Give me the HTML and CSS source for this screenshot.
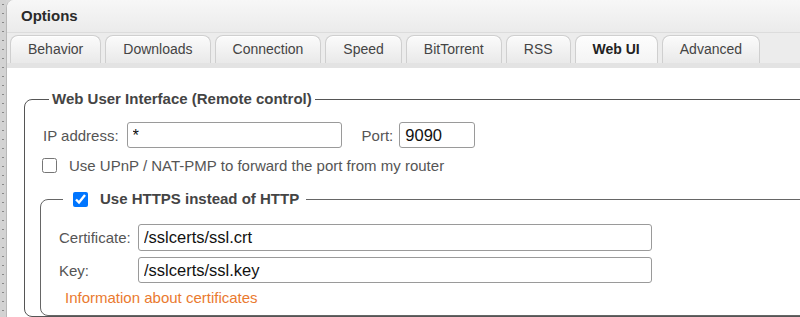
FILE: index.html
```html
<!DOCTYPE html>
<html lang="en">
<head>
    <meta charset="UTF-8">
    <title>Options</title>
    <link rel="stylesheet" href="styles.css">
</head>
<body>
    <div class="backdrop"></div>

    <div class="window">
        <div class="titlebar">Options</div>

        <div class="tabs">
            <div class="tab">Behavior</div>
            <div class="tab">Downloads</div>
            <div class="tab">Connection</div>
            <div class="tab">Speed</div>
            <div class="tab">BitTorrent</div>
            <div class="tab">RSS</div>
            <div class="tab active">Web UI</div>
            <div class="tab">Advanced</div>
        </div>

        <div class="content">
            <fieldset class="group">
                <legend class="group-title">Web User Interface (Remote control)</legend>

                <div class="row">
                    <label class="label" for="ip">IP address:</label>
                    <input class="field ip" id="ip" type="text" value="*">
                    <label class="label port-label" for="port">Port:</label>
                    <input class="field port" id="port" type="text" value="9090">
                </div>

                <div class="row check-row">
                    <input class="check" type="checkbox" id="upnp">
                    <label class="label" for="upnp">Use UPnP / NAT-PMP to forward the port from my router</label>
                </div>

                <fieldset class="group inner">
                    <legend class="group-title https">
                        <input class="check" type="checkbox" id="https" checked>
                        <label for="https">Use HTTPS instead of HTTP</label>
                    </legend>

                    <div class="cert-grid">
                        <label class="label" for="cert">Certificate:</label>
                        <input class="field" id="cert" type="text" value="/sslcerts/ssl.crt">
                        <label class="label" for="key">Key:</label>
                        <input class="field" id="key" type="text" value="/sslcerts/ssl.key">
                    </div>

                    <a class="info-link" href="#">Information about certificates</a>
                </fieldset>
            </fieldset>
        </div>
    </div>
</body>
</html>
```

FILE: styles.css
```css
* {
    box-sizing: border-box;
}

body {
    margin: 0;
    height: 317px;
    display: flex;
    overflow: hidden;
    background: #d6d6d6;
    font-family: 'Liberation Sans', Arial, sans-serif;
    font-size: 15px;
    color: #555;
}

/* page behind the dialog */
.backdrop {
    width: 6px;
    flex-shrink: 0;
    background-color: #d3d3d3;
    background-image: radial-gradient(circle, #888 0.7px, transparent 1px);
    background-size: 6px 9px;
}

.window {
    flex: 1;
    min-width: 1000px;
    background: #fff;
    border-left: 1px solid #b8b8b8;
    border-top-left-radius: 8px;
    overflow: hidden;
}

.titlebar {
    height: 33px;
    padding-left: 14px;
    line-height: 31px;
    font-weight: bold;
    color: #2a2a2a;
    background: linear-gradient(#f7f7f7, #ebebeb);
    border-bottom: 1px solid #dcdcdc;
}

.tabs {
    display: flex;
    gap: 4px;
    height: 35px;
    padding: 2px 0 0 3px;
    background: #ececec;
    border-bottom: 5px solid #e3e3e3;
}

.tab {
    height: 28px;
    padding: 0 17px;
    line-height: 27px;
    font-size: 14px;
    color: #444;
    background: linear-gradient(#fbfbfb, #e9e9e9);
    border: 1px solid #cfcfcf;
    border-bottom: none;
    border-radius: 8px 8px 0 0;
    box-shadow: inset 0 1px 0 #fff;
}

.tab.active {
    font-weight: bold;
    color: #222;
    background: linear-gradient(#fdfdfd, #f4f4f4);
}

.content {
    padding: 21px 0 0 17px;
}

.group {
    margin: 0;
    padding: 13px 18px 0;
    border: 1px solid #555;
    border-radius: 8px;
}

.group-title {
    margin-left: 6px;
    padding: 0 3px;
    font-weight: bold;
    color: #444;
    line-height: 20px;
}

.row {
    display: flex;
    align-items: center;
    height: 26px;
}

.label {
    color: #555;
}

.field {
    height: 26px;
    padding: 0 6px 0 5px;
    font-family: inherit;
    font-size: 16.5px;
    color: #111;
    border: 1px solid #9a9a9a;
    border-radius: 3px;
    background: #fff;
}

.ip {
    width: 215px;
    margin-left: 8px;
}

.port-label {
    margin-left: 20px;
}

.port {
    width: 76px;
    margin-left: 6px;
}

.check-row {
    margin-top: 6px;
    height: 22px;
}

.check {
    width: 15px;
    height: 15px;
    margin: 0 12px 0 -1px;
}

.inner {
    margin: 13px 0 0 -3px;
    padding: 15px 18px 7px;
    border-color: #666;
}

.https {
    display: flex;
    align-items: center;
    margin-left: 4px;
    padding: 0 7px 0 10px;
}

.https .check {
    margin: 0 12px 0 0;
}

.cert-grid {
    display: grid;
    grid-template-columns: 79px 514px;
    grid-template-rows: 27px 26px;
    row-gap: 6px;
    align-items: center;
}

.cert-grid .field {
    height: 100%;
}

.info-link {
    display: block;
    margin: 5px 0 0 6px;
    line-height: 20px;
    color: #ea7a2f;
    text-decoration: none;
}
```
